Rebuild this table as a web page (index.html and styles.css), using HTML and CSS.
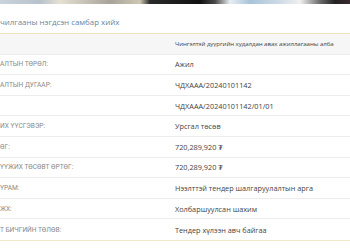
FILE: index.html
```html
<!DOCTYPE html>
<html>
<head>
<meta charset="utf-8">
<link rel="stylesheet" href="styles.css">
</head>
<body>
<div class="banner"></div>
<div class="title">чилгааны нэгдсэн самбар хийх</div>
<div class="table">
  <div class="row first"><div class="lab"></div><div class="val small">Чингэлтэй дүүргийн худалдан авах ажиллагааны алба</div></div>
  <div class="row"><div class="lab">АЛТЫН ТӨРӨЛ:</div><div class="val">Ажил</div></div>
  <div class="row"><div class="lab">АЛТЫН ДУГААР:</div><div class="val">ЧДХААА/20240101142</div></div>
  <div class="row"><div class="lab"></div><div class="val">ЧДХААА/20240101142/01/01</div></div>
  <div class="row"><div class="lab">ИХ ҮҮСГЭВЭР:</div><div class="val">Урсгал төсөв</div></div>
  <div class="row"><div class="lab">ӨГ:</div><div class="val">720,289,920 ₮</div></div>
  <div class="row"><div class="lab">ҮҮЖИХ ТӨСӨВТ ӨРТӨГ:</div><div class="val">720,289,920 ₮</div></div>
  <div class="row"><div class="lab">ҮРАМ:</div><div class="val">Нээлттэй тендер шалгаруулалтын арга</div></div>
  <div class="row"><div class="lab">ЖХ:</div><div class="val">Холбаршуулсан шахим</div></div>
  <div class="row"><div class="lab">Т БИЧГИЙН ТӨЛӨВ:</div><div class="val">Тендер хүлээн авч байгаа</div></div>
</div>
</body>
</html>
```
FILE: styles.css
```css
html, body { margin: 0; padding: 0; background: #fff; }
body { width: 350px; height: 250px; overflow: hidden; font-family: "Open Sans", sans-serif; }
.banner {
  height: 4px;
  background: linear-gradient(90deg, #c9d3dc 0px, #b7c2cc 40px, #e6e0d2 60px, #a7a39a 110px, #cfc7b4 140px, #2a2a2a 150px, #111 200px, #4a4a4a 215px, #e8eef3 230px, #a9c3da 250px, #cfdbe6 280px, #f0f0f0 300px, #6b6b6b 320px, #222 335px, #3a2a30 350px);
}
.title {
  height: 30px;
  box-sizing: border-box;
  padding-top: 13px;
  font-size: 7.9px;
  color: #6a86a0;
  border-bottom: 1px solid #f0e4bf;
  white-space: nowrap;
}
.table { border-bottom: 1px solid #f2e8c8; }
.row {
  display: flex;
  align-items: center;
  height: 20.6px;
  box-sizing: border-box;
  border-bottom: 1px solid #ececec;
}
.row:last-child { border-bottom: none; }
.row.first { background: #f6f6f6; }
.lab {
  width: 173px;
  flex: none;
  font-family: Roboto, sans-serif;
  font-size: 6.6px;
  color: #8a8a8a;
  white-space: nowrap;
  overflow: hidden;
}
.val {
  flex: 1;
  font-size: 7.3px;
  color: #444;
  white-space: nowrap;
  padding-left: 2px;
}
.val.small { font-size: 6.1px; letter-spacing: -0.05px; }
```
